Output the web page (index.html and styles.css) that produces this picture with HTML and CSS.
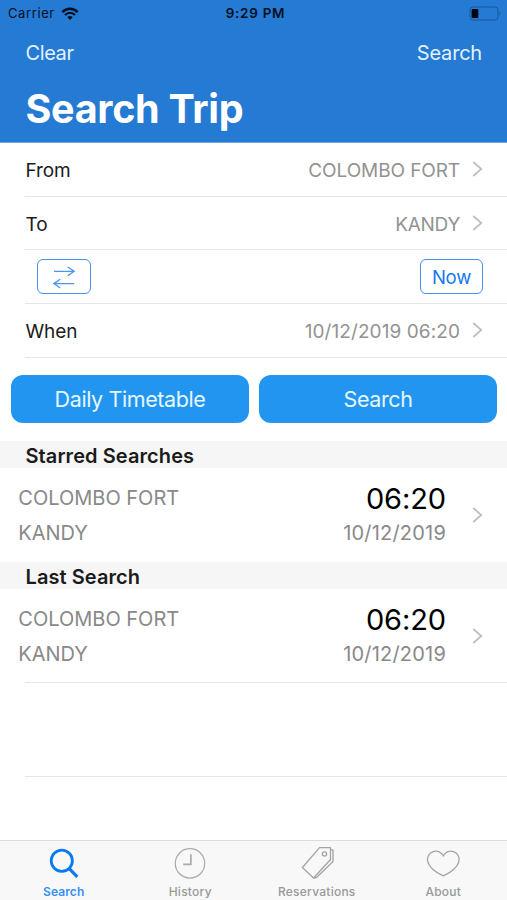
FILE: index.html
```html
<!DOCTYPE html>
<html lang="en">
<head>
<meta charset="utf-8">
<title>Search Trip</title>
<link rel="stylesheet" href="styles.css">
</head>
<body>
<div class="app">
  <header class="header">
    <div class="status">
      <div class="carrier"><span>Carrier</span>
        <svg class="wifi" width="18" height="14" viewBox="0 0 18 14"><g fill="none" stroke="#03101f" stroke-width="2.3"><path d="M1.3 5.1C5.8.6 12.2.6 16.7 5.1"/><path d="M4 8C7 5.1 11 5.1 14 8"/></g><path d="M6.3 10.2Q9 7.8 11.7 10.2L9 13Z" fill="#03101f"/></svg>
      </div>
      <span class="clock">9:29 PM</span>
      <svg class="battery" width="33" height="15" viewBox="0 0 33 15"><rect x="1" y="1" width="28" height="13" rx="3" fill="none" stroke="#1a5796" stroke-width="1"/><rect x="2.6" y="3" width="6.7" height="9" rx="1" fill="#000611"/><path d="M30.5 5.2Q32.5 7.5 30.5 9.8Z" fill="#1a5796"/></svg>
    </div>
    <nav class="actions"><span class="clear">Clear</span><span class="do-search">Search</span></nav>
    <h1 class="title">Search Trip</h1>
  </header>
  <main class="main">
    <section class="form">
      <div class="row"><span class="label">From</span><span class="value">COLOMBO FORT</span><svg class="chev" width="12" height="18" viewBox="0 0 12 18"><path d="M2.3 2L10.3 9L2.3 16"/></svg></div>
      <div class="row"><span class="label">To</span><span class="value city">KANDY</span><svg class="chev" width="12" height="18" viewBox="0 0 12 18"><path d="M2.3 2L10.3 9L2.3 16"/></svg></div>
      <div class="row tools">
        <span class="outline swap"><svg width="24" height="24" viewBox="0 0 24 24"><path d="M2 6.3H22M15.7 2L22.2 6.3L15.7 10.7M22.2 18.6H2M8.3 14.2L1.8 18.6L8.3 23" fill="none" stroke="#4a95f6" stroke-width="1.3"/></svg></span>
        <span class="outline now"><span>Now</span></span>
      </div>
      <div class="row"><span class="label">When</span><span class="value datetime">10/12/2019 06:20</span><svg class="chev" width="12" height="18" viewBox="0 0 12 18"><path d="M2.3 2L10.3 9L2.3 16"/></svg></div>
    </section>
    <div class="buttons"><span class="button">Daily Timetable</span><span class="button">Search</span></div>
    <h2 class="heading">Starred Searches</h2>
    <article class="trip">
      <div class="places"><span>COLOMBO FORT</span><span>KANDY</span></div>
      <div class="times"><span class="time">06:20</span><span class="date">10/12/2019</span></div>
      <svg class="chev" width="12" height="18" viewBox="0 0 12 18"><path d="M2.3 2L10.3 9L2.3 16"/></svg>
    </article>
    <h2 class="heading">Last Search</h2>
    <article class="trip">
      <div class="places"><span>COLOMBO FORT</span><span>KANDY</span></div>
      <div class="times"><span class="time">06:20</span><span class="date">10/12/2019</span></div>
      <svg class="chev" width="12" height="18" viewBox="0 0 12 18"><path d="M2.3 2L10.3 9L2.3 16"/></svg>
    </article>
    <div class="blank"></div>
  </main>
  <footer class="tabs">
    <div class="tab active"><svg width="36" height="36" viewBox="0 0 36 36"><g fill="none" stroke="#087af5"><circle cx="15.8" cy="16.7" r="10.6" stroke-width="2.8"/><path d="M23 24.4L31.3 32.8" stroke-width="3.2"/></g></svg><span>Search</span></div>
    <div class="tab"><svg width="36" height="36" viewBox="0 0 36 36"><g fill="none" stroke="#aaa"><circle cx="18" cy="19.4" r="14.7" stroke-width="1.2"/><path d="M18.9 10.3V20.3H11.2" stroke-width="1.7"/></g></svg><span>History</span></div>
    <div class="tab"><svg width="36" height="36" viewBox="0 0 36 36"><g fill="none" stroke="#a4a4a4" stroke-width="1.3" stroke-linejoin="round"><path d="M20.5 3.7H31.5V15.5L14.5 34L3.4 23.5Z"/><path d="M31.5 5.3L34 6.2V17.5L17.5 33.5L14.5 34"/><circle cx="25.5" cy="10" r="2.1"/></g></svg><span>Reservations</span></div>
    <div class="tab"><svg width="36" height="36" viewBox="0 0 36 36"><path d="M18.3 11.8C16.1 7.7 11.8 6.3 8.1 7.6C3.5 9.2 1.4 14 2.9 18.2C4.8 23.7 9.8 28 18.3 31.9C26.8 28 31.8 23.7 33.7 18.2C35.2 14 33.1 9.2 28.5 7.6C24.8 6.3 20.5 7.7 18.3 11.8Z" fill="none" stroke="#a4a4a4" stroke-width="1.3"/></svg><span>About</span></div>
  </footer>
</div>
</body>
</html>
```
FILE: styles.css
```css
* { box-sizing: border-box; }
body { margin: 0; background: #fff; font-family: Inter, "Liberation Sans", sans-serif; color: #1b1b1b; }
svg { display: block; flex: none; }
span { white-space: nowrap; }
.app { width: 507px; height: 900px; display: flex; flex-direction: column; overflow: hidden; }
.header { height: 143px; background: #257ad3; border-bottom: 1px solid #73a9e1; flex: none; }
.status { height: 27px; display: grid; grid-template-columns: 1fr auto 1fr; align-items: center; padding: 0 5px 0 8px; color: #03101f; font-size: 13px; line-height: 27px; }
.carrier { display: flex; align-items: center; gap: 6px; letter-spacing: .6px; }
.clock { font-weight: 600; font-size: 13.5px; letter-spacing: .7px; padding-left: 1px; }
.battery { justify-self: end; }
.actions { height: 51px; padding: 0 25px 0 25.5px; display: flex; justify-content: space-between; align-items: center; color: #e2f2ff; font-size: 20px; }
.clear { letter-spacing: -.4px; }
.do-search { letter-spacing: -.2px; }
.title { margin: 0; padding-left: 25.5px; color: #fff; font-size: 39.5px; font-weight: 700; line-height: 62px; letter-spacing: -.3px; }
.row { height: 53.7px; margin-left: 25px; padding-right: 24px; border-bottom: 1px solid #e6e6e6; display: flex; align-items: center; font-size: 19px; }
.label { padding: 3px 0 0 .5px; letter-spacing: -.1px; }
.value { margin-left: auto; margin-right: 11px; padding-top: 3px; color: #929292; letter-spacing: -.1px; }
.city { letter-spacing: -.3px; }
.datetime { letter-spacing: .08px; }
.chev path { fill: none; stroke: #bdbdbd; stroke-width: 1.7; }
.tools { padding: 0 24px 0 12px; justify-content: space-between; }
.outline { height: 35px; border: 1.5px solid #438ff2; border-radius: 6px; display: flex; align-items: center; justify-content: center; color: #1779ee; }
.swap { width: 54px; }
.now { width: 63px; padding-top: 1px; font-size: 18.5px; letter-spacing: -.2px; }
.buttons { height: 83px; padding: 17px 10px 18px 11px; display: grid; grid-template-columns: 1fr 1fr; gap: 10px; }
.button { border-radius: 12px; background: #2295f1; color: #e5f7ff; font-size: 21.5px; letter-spacing: -.4px; display: flex; align-items: center; justify-content: center; }
.heading { margin: 0; height: 27px; padding: 1px 0 0 25.5px; background: #f6f6f6; font-size: 20px; font-weight: 600; line-height: 28px; letter-spacing: .08px; }
.trip { height: 94px; padding: 0 24px 0 18.3px; display: flex; align-items: center; }
.places, .times { display: flex; flex-direction: column; color: #898989; font-size: 20px; line-height: 35px; padding-top: 2px; }
.times { margin-left: auto; margin-right: 25px; align-items: flex-end; }
.time { color: #000; font-size: 29px; letter-spacing: -.1px; }
.date { letter-spacing: .2px; }
.blank { height: 95px; margin: -.6px 0 0 25px; border-top: 1px solid #e6e6e6; border-bottom: 1px solid #e6e6e6; }
.tabs { margin-top: auto; height: 60px; flex: none; display: grid; grid-template-columns: repeat(4, 126.5px); border-top: 1.5px solid #dcdcdc; background: #f8f8f8; color: #999; font-size: 12px; font-weight: 500; }
.tab { display: flex; flex-direction: column; align-items: center; padding: 3px 0 0 1px; line-height: 24px; letter-spacing: .25px; }
.active { color: #3690f7; font-weight: 600; letter-spacing: .1px; }
```
